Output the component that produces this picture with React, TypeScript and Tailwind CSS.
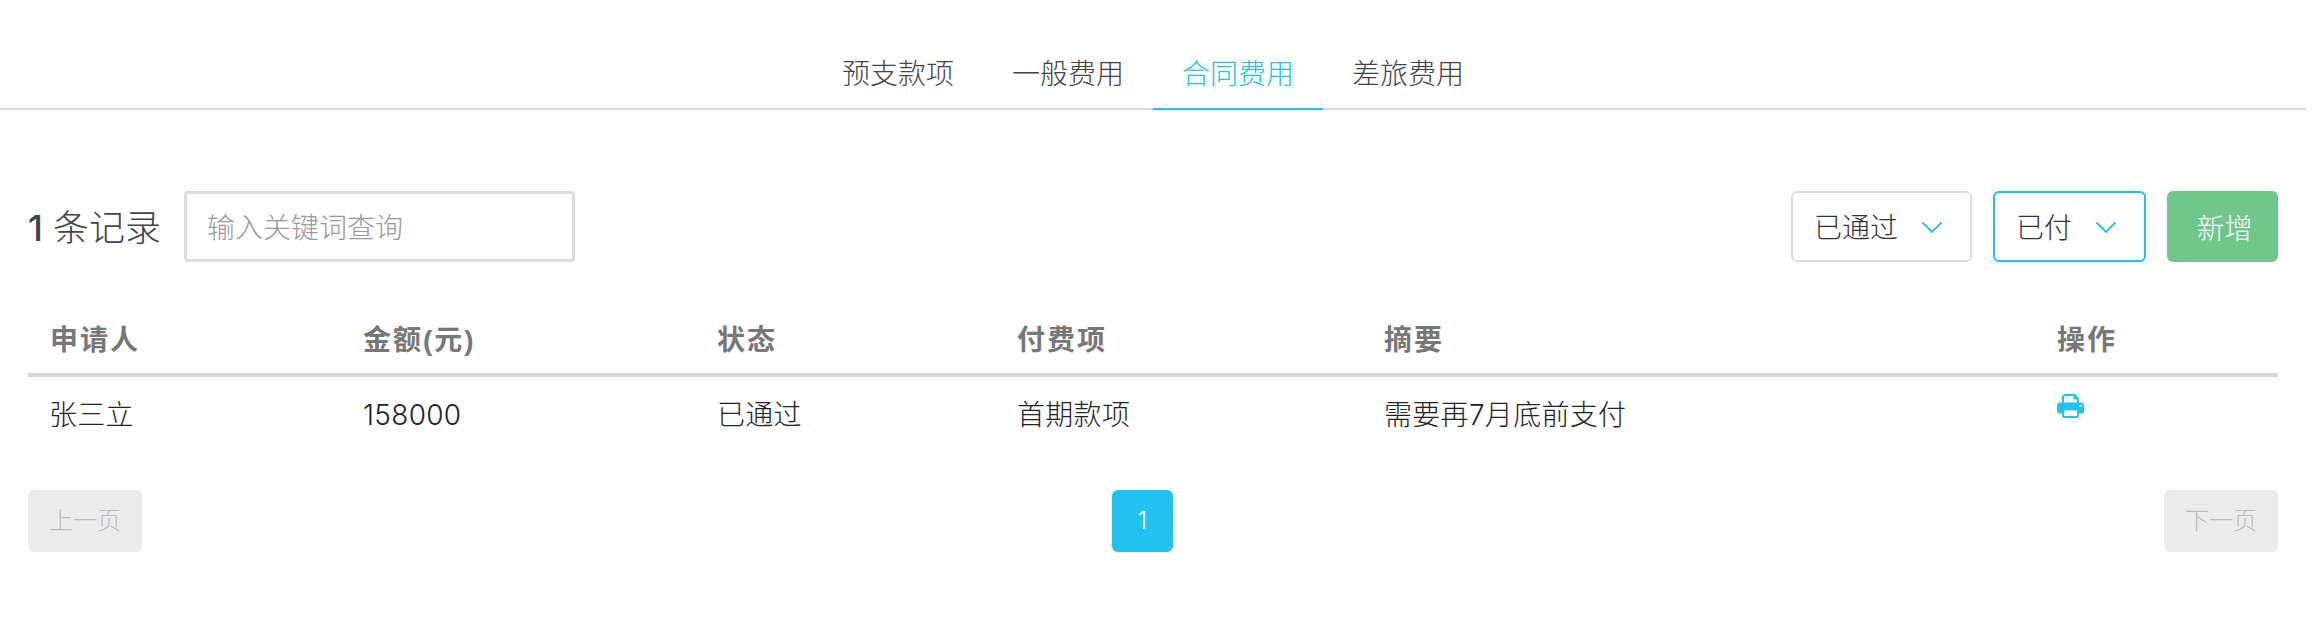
const tabs = ['预支款项', '一般费用', '合同费用', '差旅费用']
const active = '合同费用'

function PrintIcon() {
  return (
    <svg viewBox="0 0 27 24" className="w-[27px] h-[24px] block" aria-hidden="true">
      <path d="M6 10V3.500A2.500 2.500 0 0 1 8.500 1H17.500L21 4.500V10" fill="none" stroke="#20c2f0" strokeWidth="2" />
      <path d="M16.500 1V5.500H21" fill="#20c2f0" />
      <path d="M3 8.500H24A3 3 0 0 1 27 11.500V18A1.500 1.500 0 0 1 25.500 19.500H3A3 3 0 0 1 0 16.500V11.500A3 3 0 0 1 3 8.500Z" fill="#20c2f0" />
      <rect x="6" y="15.500" width="15" height="7.500" rx="1" fill="#fff" stroke="#20c2f0" strokeWidth="2" />
      <rect x="22.500" y="11" width="2" height="2" fill="#fff" />
    </svg>
  )
}

function Select({ label, focus }: { label: string; focus?: boolean }) {
  return (
    <div className={`h-[71px] rounded-[6px] border-[2px] bg-white flex items-center pl-[21px] pr-[27px] text-[28px] text-[#333] ${focus ? 'border-[#20c2f0]' : 'border-[#dcdcdc]'}`}>
      <span className="pt-[3px]">{label}</span>
      <svg viewBox="0 0 22 13" className="ml-[23px] mt-[2px] w-[22px] h-[13px]" aria-hidden="true">
        <path d="M1.500 1.500L11 11L20.500 1.500" fill="none" stroke="#20c2f0" strokeWidth="1.800" />
      </svg>
    </div>
  )
}

export default function App() {
  return (
    <div className="h-[624px] pr-[18px] bg-white font-['Inter','Noto_Sans_CJK_SC',sans-serif] font-light text-[#333] overflow-hidden">
      {/* tabs */}
      <div className="h-[110px] flex justify-center items-end border-b-2 border-[#d9d9d9]">
        {tabs.map((t) => (
          <div
            key={t}
            className={`w-[170px] h-[60px] -mb-[2px] pb-[10px] flex items-center justify-center text-[28px] border-b-2 ${t === active ? 'text-[#20c2f0] border-[#20c2f0]' : 'text-[#444] border-transparent'}`}
          >
            {t}
          </div>
        ))}
      </div>

      <div className="px-[28px]">
        {/* toolbar */}
        <div className="mt-[81px] flex items-center justify-between">
          <div className="flex items-center">
            <span className="text-[36px] text-[#444] w-[156px] pt-[3px]"><span className="font-medium mr-[10px]">1</span>条记录</span>
            <input
              placeholder="输入关键词查询"
              className="w-[391px] h-[71px] rounded-[4px] border-[3px] border-[#dcdcdc] pl-[20px] pt-[3px] text-[28px] placeholder:text-[#999] outline-none"
            />
          </div>
          <div className="flex items-center gap-[21px]">
            <Select label="已通过" />
            <Select label="已付" focus />
            <button className="w-[111px] h-[71px] rounded-[6px] bg-[#6fc78b] text-white text-[28px] pl-[4px] pt-[4px]">新增</button>
          </div>
        </div>

        {/* table */}
        <table className="mt-[40px] w-full table-fixed">
          <colgroup>
            <col className="w-[313px]" />
            <col className="w-[354px]" />
            <col className="w-[300px]" />
            <col className="w-[367px]" />
            <col className="w-[673px]" />
            <col className="w-[243px]" />
          </colgroup>
          <thead>
            <tr className="border-b-4 border-[#d9d9d9] h-[73px]">
              {['申请人', '金额(元)', '状态', '付费项', '摘要', '操作'].map((h) => (
                <th key={h} className="pl-[22px] pt-[7px] text-left text-[28px] font-bold tracking-[2px] text-[#777] font-['Liberation_Sans','Noto_Sans_CJK_SC',sans-serif]">{h}</th>
              ))}
            </tr>
          </thead>
          <tbody>
            <tr className="h-[78px] text-[28px] text-[#222] tracking-[0.3px]">
              <td className="pl-[21px]">张三立</td>
              <td className="pl-[22px]">158000</td>
              <td className="pl-[22px]">已通过</td>
              <td className="pl-[22px]">首期款项</td>
              <td className="pl-[22px]">需要再7月底前支付</td>
              <td className="pl-[22px] align-top pt-[17px]"><PrintIcon /></td>
            </tr>
          </tbody>
        </table>

        {/* pagination */}
        <div className="mt-[37px] flex items-center justify-between">
          <button className="w-[114px] h-[62px] rounded-[6px] bg-[#ececec] text-[#bbb] text-[24px]">上一页</button>
          <div className="flex-1 flex justify-center pr-[21px]">
            <button className="w-[61px] h-[62px] rounded-[6px] bg-[#20c2f0] text-white text-[24px]">1</button>
          </div>
          <button className="w-[114px] h-[62px] rounded-[6px] bg-[#ececec] text-[#bbb] text-[24px]">下一页</button>
        </div>
      </div>
    </div>
  )
}
